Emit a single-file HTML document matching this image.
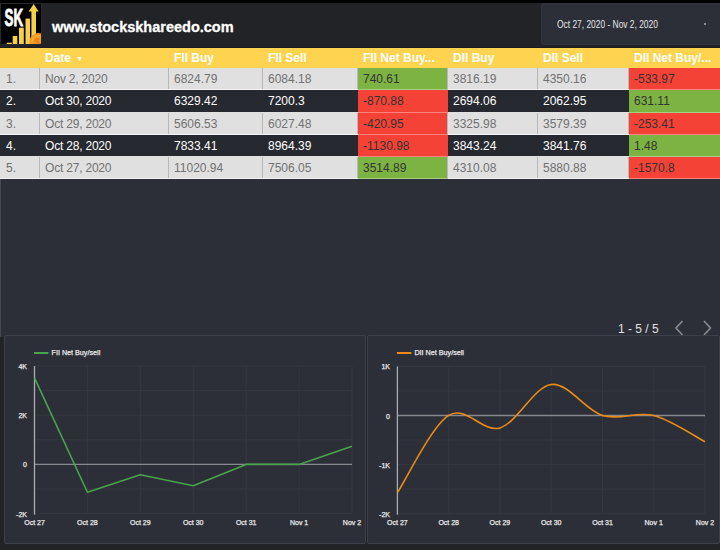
<!DOCTYPE html>
<html><head><meta charset="utf-8">
<style>
*{margin:0;padding:0;box-sizing:border-box}
html,body{width:720px;height:550px;overflow:hidden;background:#222326;font-family:"Liberation Sans",sans-serif}
.abs{position:absolute}
#topband{left:0;top:0;width:720px;height:3px;background:#000}
#logo{left:0px;top:3px;width:42px;height:42px;background:#000;border:1px solid #2a2a2a;border-radius:2px;overflow:hidden}
#site{left:52px;top:17px;font-size:14.5px;line-height:20px;font-weight:bold;color:#fff;white-space:nowrap;-webkit-text-stroke:0.3px #fff}
#dp{left:541px;top:3px;width:185px;height:42px;background:#2c2f38;border-radius:3px;border:1px solid #33363f}
#hline{left:0;top:47px;width:720px;height:1px;background:#1c1d20}
#dptext{left:556.5px;top:18.5px;font-size:10px;line-height:12px;color:#e6e6e6;white-space:nowrap;transform:scaleX(0.84);transform-origin:0 0}
#dpdot{left:704px;top:23px;width:2px;height:2px;background:#aaa;border-radius:1px}
#tbl{left:0;top:48px;width:720px;height:289px;background:#2d2f38;border-left:1px solid #46494e}
.row{position:absolute;left:0;width:720px;height:22.3px}
.cell{position:absolute;top:0;height:22.3px;line-height:21px;font-size:12px;padding-left:5px;padding-top:1px;white-space:nowrap;overflow:hidden}
.hdr .cell{height:20px;line-height:20px;padding-top:0;font-weight:bold;color:#fff;font-size:12px}
.light{background:#e0e0e0;color:#717171}
.dark{background:#272930;color:#fff}
.sep{position:absolute;left:0;bottom:0;width:720px;height:1px;background:#f4f4f4}
.vl{position:absolute;top:0;width:1px;height:21.3px;background:#b8b8b8}
.g{background:#7cb342!important;color:#333!important}
.r{background:#f44336!important;color:#333!important}
#pg{left:618px;top:322px;font-size:12px;line-height:14px;color:#e0e0e0;white-space:nowrap}
.panel{position:absolute;top:335px;height:209px;background:#2d2f38;border:1px solid #3d4048;border-radius:2px}
.lbl{position:absolute;font-size:7px;line-height:8px;color:#e8e8e8;white-space:nowrap;-webkit-text-stroke:0.25px #e8e8e8}
</style></head><body>
<div id="topband" class="abs"></div>

<div id="logo" class="abs">
<svg width="41" height="42" viewBox="0 0 41 42" style="position:absolute;left:0px;top:-1px">
  <text x="3.5" y="23" font-family="Liberation Sans" font-weight="bold" font-size="24" fill="#fff" stroke="#fff" stroke-width="0.9" textLength="18.5" lengthAdjust="spacingAndGlyphs">SK</text>
  <rect x="5.8" y="39.7" width="5" height="2" fill="#f7d04a"/>
  <rect x="11.7" y="33" width="4.6" height="9" fill="#f7d04a"/>
  <rect x="18" y="24.7" width="4.8" height="17.3" fill="#f7d04a"/>
  <rect x="24.5" y="15.6" width="4.5" height="26.4" fill="#f7d04a"/>
  <rect x="30.4" y="8" width="4.6" height="34" fill="#f7d04a"/>
  <polygon points="27.6,8.6 32.7,1 37.6,8.6" fill="#f7d04a"/>
  <circle cx="37" cy="38.5" r="8.6" fill="#f39a26"/><circle cx="37" cy="38.5" r="6" fill="none" stroke="#f7b245" stroke-width="1"/>
  <text x="33.6" y="42.5" font-family="Liberation Sans" font-weight="bold" font-size="10" fill="#e8801a">$</text>
</svg>
</div>
<div id="site" class="abs">www.stockskhareedo.com</div>

<div id="hline" class="abs"></div>
<div id="dp" class="abs"></div>
<div id="dptext" class="abs">Oct 27, 2020 - Nov 2, 2020</div>
<div id="dpdot" class="abs"></div>

<div id="tbl" class="abs"></div>
<!-- header -->
<div class="row hdr" style="top:48px;height:20px;background:#fdd34f">
  <div class="cell" style="left:40px;width:129px">Date <span style="font-size:7px;position:relative;top:-1px;left:2px">&#9660;</span></div>
  <div class="cell" style="left:169px;width:94px">FII Buy</div>
  <div class="cell" style="left:263px;width:95px">FII Sell</div>
  <div class="cell" style="left:358px;width:90px">FII Net Buy...</div>
  <div class="cell" style="left:448px;width:90px">DII Buy</div>
  <div class="cell" style="left:538px;width:91px">DII Sell</div>
  <div class="cell" style="left:629px;width:91px">DII Net Buy/...</div>
</div>
<div class="row light" style="top:68.0px">
<div class="cell" style="left:0px;width:40px;padding-left:6px">1.</div>
<div class="cell" style="left:40px;width:129px;letter-spacing:-0.2px">Nov 2, 2020</div>
<div class="cell" style="left:169px;width:94px">6824.79</div>
<div class="cell" style="left:263px;width:95px">6084.18</div>
<div class="cell g" style="left:358px;width:90px">740.61</div>
<div class="cell" style="left:448px;width:90px">3816.19</div>
<div class="cell" style="left:538px;width:91px">4350.16</div>
<div class="cell r" style="left:629px;width:91px">-533.97</div>
<div class="vl" style="left:39px"></div>
<div class="vl" style="left:168px"></div>
<div class="vl" style="left:262px"></div>
<div class="vl" style="left:357px"></div>
<div class="vl" style="left:447px"></div>
<div class="vl" style="left:537px"></div>
<div class="vl" style="left:628px"></div>
<div class="sep" style="left:0px;width:358px;background:#f4f4f4"></div>
<div class="sep" style="left:448px;width:181px;background:#f4f4f4"></div>
<div class="sep" style="left:358px;width:90px;background:rgba(255,255,255,0.35)"></div>
<div class="sep" style="left:629px;width:91px;background:rgba(255,255,255,0.35)"></div>
</div>
<div class="row dark" style="top:90.3px">
<div class="cell" style="left:0px;width:40px;padding-left:6px">2.</div>
<div class="cell" style="left:40px;width:129px;letter-spacing:-0.2px">Oct 30, 2020</div>
<div class="cell" style="left:169px;width:94px">6329.42</div>
<div class="cell" style="left:263px;width:95px">7200.3</div>
<div class="cell r" style="left:358px;width:90px">-870.88</div>
<div class="cell" style="left:448px;width:90px">2694.06</div>
<div class="cell" style="left:538px;width:91px">2062.95</div>
<div class="cell g" style="left:629px;width:91px">631.11</div>
<div class="sep" style="left:0px;width:358px;background:#e0e0e0"></div>
<div class="sep" style="left:448px;width:181px;background:#e0e0e0"></div>
<div class="sep" style="left:358px;width:90px;background:rgba(255,255,255,0.35)"></div>
<div class="sep" style="left:629px;width:91px;background:rgba(255,255,255,0.35)"></div>
</div>
<div class="row light" style="top:112.6px">
<div class="cell" style="left:0px;width:40px;padding-left:6px">3.</div>
<div class="cell" style="left:40px;width:129px;letter-spacing:-0.2px">Oct 29, 2020</div>
<div class="cell" style="left:169px;width:94px">5606.53</div>
<div class="cell" style="left:263px;width:95px">6027.48</div>
<div class="cell r" style="left:358px;width:90px">-420.95</div>
<div class="cell" style="left:448px;width:90px">3325.98</div>
<div class="cell" style="left:538px;width:91px">3579.39</div>
<div class="cell r" style="left:629px;width:91px">-253.41</div>
<div class="vl" style="left:39px"></div>
<div class="vl" style="left:168px"></div>
<div class="vl" style="left:262px"></div>
<div class="vl" style="left:357px"></div>
<div class="vl" style="left:447px"></div>
<div class="vl" style="left:537px"></div>
<div class="vl" style="left:628px"></div>
<div class="sep" style="left:0px;width:358px;background:#f4f4f4"></div>
<div class="sep" style="left:448px;width:181px;background:#f4f4f4"></div>
<div class="sep" style="left:358px;width:90px;background:rgba(255,255,255,0.35)"></div>
<div class="sep" style="left:629px;width:91px;background:rgba(255,255,255,0.35)"></div>
</div>
<div class="row dark" style="top:134.9px">
<div class="cell" style="left:0px;width:40px;padding-left:6px">4.</div>
<div class="cell" style="left:40px;width:129px;letter-spacing:-0.2px">Oct 28, 2020</div>
<div class="cell" style="left:169px;width:94px">7833.41</div>
<div class="cell" style="left:263px;width:95px">8964.39</div>
<div class="cell r" style="left:358px;width:90px">-1130.98</div>
<div class="cell" style="left:448px;width:90px">3843.24</div>
<div class="cell" style="left:538px;width:91px">3841.76</div>
<div class="cell g" style="left:629px;width:91px">1.48</div>
<div class="sep" style="left:0px;width:358px;background:#e0e0e0"></div>
<div class="sep" style="left:448px;width:181px;background:#e0e0e0"></div>
<div class="sep" style="left:358px;width:90px;background:rgba(255,255,255,0.35)"></div>
<div class="sep" style="left:629px;width:91px;background:rgba(255,255,255,0.35)"></div>
</div>
<div class="row light" style="top:157.2px">
<div class="cell" style="left:0px;width:40px;padding-left:6px">5.</div>
<div class="cell" style="left:40px;width:129px;letter-spacing:-0.2px">Oct 27, 2020</div>
<div class="cell" style="left:169px;width:94px">11020.94</div>
<div class="cell" style="left:263px;width:95px">7506.05</div>
<div class="cell g" style="left:358px;width:90px">3514.89</div>
<div class="cell" style="left:448px;width:90px">4310.08</div>
<div class="cell" style="left:538px;width:91px">5880.88</div>
<div class="cell r" style="left:629px;width:91px">-1570.8</div>
<div class="vl" style="left:39px"></div>
<div class="vl" style="left:168px"></div>
<div class="vl" style="left:262px"></div>
<div class="vl" style="left:357px"></div>
<div class="vl" style="left:447px"></div>
<div class="vl" style="left:537px"></div>
<div class="vl" style="left:628px"></div>
<div class="sep" style="left:0px;width:358px;background:#f4f4f4"></div>
<div class="sep" style="left:448px;width:181px;background:#f4f4f4"></div>
<div class="sep" style="left:358px;width:90px;background:rgba(255,255,255,0.35)"></div>
<div class="sep" style="left:629px;width:91px;background:rgba(255,255,255,0.35)"></div>
</div>
<div id="pg" class="abs">1 - 5 / 5</div>
<svg class="abs" style="left:0;top:0" width="720" height="550">
<polyline points="682.5,321 676,328 682.5,335" fill="none" stroke="#8a8c90" stroke-width="1.6"/>
<polyline points="704,321 710.5,328 704,335" fill="none" stroke="#8a8c90" stroke-width="1.6"/>
</svg>
<div class="panel" style="left:4px;width:362px"></div>
<div class="panel" style="left:367px;width:353px"></div>
<svg class="abs" style="left:0;top:0" width="720" height="550"><line x1="34.5" y1="366.00" x2="352" y2="366.00" stroke="#353840" stroke-width="1"/><line x1="34.5" y1="390.60" x2="352" y2="390.60" stroke="#353840" stroke-width="1"/><line x1="34.5" y1="415.20" x2="352" y2="415.20" stroke="#353840" stroke-width="1"/><line x1="34.5" y1="439.80" x2="352" y2="439.80" stroke="#353840" stroke-width="1"/><line x1="34.5" y1="464.40" x2="352" y2="464.40" stroke="#353840" stroke-width="1"/><line x1="34.5" y1="489.00" x2="352" y2="489.00" stroke="#353840" stroke-width="1"/><line x1="34.5" y1="513.60" x2="352" y2="513.60" stroke="#353840" stroke-width="1"/><line x1="87.42" y1="366.00" x2="87.42" y2="513.60" stroke="#353840" stroke-width="1"/><line x1="140.33" y1="366.00" x2="140.33" y2="513.60" stroke="#353840" stroke-width="1"/><line x1="193.25" y1="366.00" x2="193.25" y2="513.60" stroke="#353840" stroke-width="1"/><line x1="246.17" y1="366.00" x2="246.17" y2="513.60" stroke="#353840" stroke-width="1"/><line x1="299.08" y1="366.00" x2="299.08" y2="513.60" stroke="#353840" stroke-width="1"/><line x1="352.00" y1="366.00" x2="352.00" y2="513.60" stroke="#353840" stroke-width="1"/><line x1="34.5" y1="464.40" x2="352" y2="464.40" stroke="#87898e" stroke-width="1.3"/><line x1="34.5" y1="366.00" x2="34.5" y2="514.60" stroke="#abacb1" stroke-width="1.3"/><path d="M34.50,377.93 L87.42,492.22 L140.33,474.76 L193.25,485.82 L246.17,464.40 L299.08,464.40 L352.00,446.18" fill="none" stroke="#47a44b" stroke-width="1.6" stroke-linejoin="round"/><line x1="34.0" y1="353" x2="48.5" y2="353" stroke="#47a44b" stroke-width="2"/></svg>
<div class="lbl" style="left:51.5px;top:349px;font-size:7.2px">FII Net Buy/sell</div>
<div class="lbl" style="left:-13px;width:40px;text-align:right;top:363.0px">4K</div>
<div class="lbl" style="left:-13px;width:40px;text-align:right;top:412.2px">2K</div>
<div class="lbl" style="left:-13px;width:40px;text-align:right;top:461.4px">0</div>
<div class="lbl" style="left:-13px;width:40px;text-align:right;top:510.6px">-2K</div>
<div class="lbl" style="left:14.5px;width:40px;text-align:center;top:518.5px">Oct 27</div>
<div class="lbl" style="left:67.4px;width:40px;text-align:center;top:518.5px">Oct 28</div>
<div class="lbl" style="left:120.3px;width:40px;text-align:center;top:518.5px">Oct 29</div>
<div class="lbl" style="left:173.2px;width:40px;text-align:center;top:518.5px">Oct 30</div>
<div class="lbl" style="left:226.2px;width:40px;text-align:center;top:518.5px">Oct 31</div>
<div class="lbl" style="left:279.1px;width:40px;text-align:center;top:518.5px">Nov 1</div>
<div class="lbl" style="left:332.0px;width:40px;text-align:center;top:518.5px">Nov 2</div>
<svg class="abs" style="left:0;top:0" width="720" height="550"><line x1="397.4" y1="366.40" x2="705" y2="366.40" stroke="#353840" stroke-width="1"/><line x1="397.4" y1="390.95" x2="705" y2="390.95" stroke="#353840" stroke-width="1"/><line x1="397.4" y1="415.50" x2="705" y2="415.50" stroke="#353840" stroke-width="1"/><line x1="397.4" y1="440.05" x2="705" y2="440.05" stroke="#353840" stroke-width="1"/><line x1="397.4" y1="464.60" x2="705" y2="464.60" stroke="#353840" stroke-width="1"/><line x1="397.4" y1="489.15" x2="705" y2="489.15" stroke="#353840" stroke-width="1"/><line x1="397.4" y1="513.70" x2="705" y2="513.70" stroke="#353840" stroke-width="1"/><line x1="448.67" y1="366.40" x2="448.67" y2="513.70" stroke="#353840" stroke-width="1"/><line x1="499.93" y1="366.40" x2="499.93" y2="513.70" stroke="#353840" stroke-width="1"/><line x1="551.20" y1="366.40" x2="551.20" y2="513.70" stroke="#353840" stroke-width="1"/><line x1="602.47" y1="366.40" x2="602.47" y2="513.70" stroke="#353840" stroke-width="1"/><line x1="653.73" y1="366.40" x2="653.73" y2="513.70" stroke="#353840" stroke-width="1"/><line x1="705.00" y1="366.40" x2="705.00" y2="513.70" stroke="#353840" stroke-width="1"/><line x1="397.4" y1="415.50" x2="705" y2="415.50" stroke="#87898e" stroke-width="1.3"/><line x1="397.4" y1="366.40" x2="397.4" y2="514.70" stroke="#abacb1" stroke-width="1.3"/><path d="M397.40,492.63 C405.94,479.76 431.58,426.21 448.67,415.43 C465.76,404.65 482.84,433.09 499.93,427.94 C517.02,422.79 534.11,386.59 551.20,384.51 C568.29,382.44 585.38,410.34 602.47,415.50 C619.56,420.66 636.64,411.13 653.73,415.50 C670.82,419.87 696.46,437.35 705.00,441.72" fill="none" stroke="#ec8c14" stroke-width="1.6" stroke-linejoin="round"/><line x1="396.9" y1="353" x2="411.4" y2="353" stroke="#ec8c14" stroke-width="2"/></svg>
<div class="lbl" style="left:414.4px;top:349px;font-size:7.2px">DII Net Buy/sell</div>
<div class="lbl" style="left:350px;width:40px;text-align:right;top:363.4px">1K</div>
<div class="lbl" style="left:350px;width:40px;text-align:right;top:412.5px">0</div>
<div class="lbl" style="left:350px;width:40px;text-align:right;top:461.6px">-1K</div>
<div class="lbl" style="left:350px;width:40px;text-align:right;top:510.7px">-2K</div>
<div class="lbl" style="left:377.4px;width:40px;text-align:center;top:518.5px">Oct 27</div>
<div class="lbl" style="left:428.7px;width:40px;text-align:center;top:518.5px">Oct 28</div>
<div class="lbl" style="left:479.9px;width:40px;text-align:center;top:518.5px">Oct 29</div>
<div class="lbl" style="left:531.2px;width:40px;text-align:center;top:518.5px">Oct 30</div>
<div class="lbl" style="left:582.5px;width:40px;text-align:center;top:518.5px">Oct 31</div>
<div class="lbl" style="left:633.7px;width:40px;text-align:center;top:518.5px">Nov 1</div>
<div class="lbl" style="left:685.0px;width:40px;text-align:center;top:518.5px">Nov 2</div>
</body></html>
